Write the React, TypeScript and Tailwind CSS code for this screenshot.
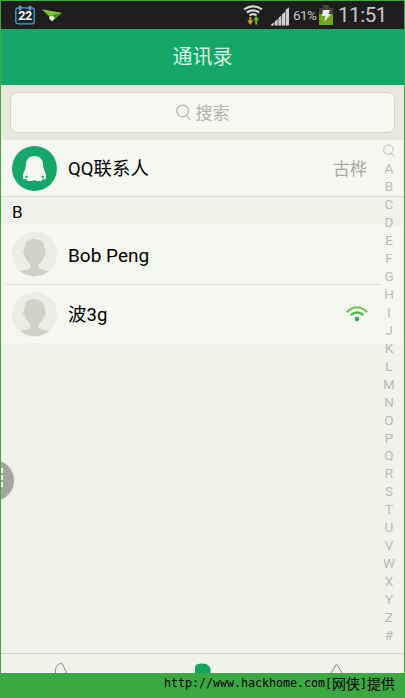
import React from "react";

const LETTERS = "ABCDEFGHIJKLMNOPQRSTUVWXYZ#".split("");

function SearchIcon({ className }: { className: string }) {
  return (
    <svg viewBox="0 0 15 16" className={className} fill="none" stroke="currentColor" strokeWidth="1.2">
      <circle cx="6.7" cy="7" r="5.9" />
      <path d="M10.4 11.4 13.6 15.2" strokeLinecap="round" />
    </svg>
  );
}

function StatusBar() {
  return (
    <div className="flex h-7 shrink-0 items-center bg-[#1e1e1e] text-[#c8c8c8]">
      <svg viewBox="0 0 20 20" className="ml-3.5 h-5 w-5 shrink-0">
        <rect x="0.8" y="2.8" width="18.4" height="16" rx="2.4" fill="#17232a" stroke="#4f9fc4" strokeWidth="1.3" />
        <path d="M5 .8v4.4M15 .8v4.4" stroke="#5cabd0" strokeWidth="2.4" />
        <text x="10.1" y="14.8" textAnchor="middle" fontFamily="Roboto, sans-serif" fontSize="12.5" fontWeight="700" letterSpacing="-0.3" fill="#fff">22</text>
      </svg>
      <svg viewBox="0 0 20 13" className="ml-[7px] h-[13px] w-5 shrink-0">
        <path d="M0 .5 20 4 11 11.5Z" fill="#62ad25" />
        <path d="M0 .5 20 4 8 6.5Z" fill="#80c83c" />
        <path d="m8 6.4 12-2.4-8.5 6.5Z" fill="#438e1c" />
        <path d="m7 8 3.2-1.5 2.8 2.5-3 3.2-2.5-2Z" fill="#e9efe5" />
      </svg>
      <svg viewBox="0 0 20 21" className="ml-[181px] h-[21px] w-5 shrink-0" fill="none" stroke="#d4d4d4" strokeWidth="2.2">
        <path d="M1 4.4Q10-1.8 19 4.4M3.8 7.5Q10 3.2 16.2 7.5M6.4 10.5Q10 7.7 13.6 10.5" />
        <path d="M7.3 12v5" stroke="#d3a01f" strokeWidth="2" />
        <path d="M4.3 15.5h6l-3 4.5Z" fill="#d3a01f" stroke="none" />
        <path d="M13.2 14.5v5" stroke="#68b52f" strokeWidth="2" />
        <path d="M10.2 15.2h6l-3-4.2Z" fill="#68b52f" stroke="none" />
      </svg>
      <svg viewBox="0 0 18 19" className="ml-2 mt-0.5 h-[19px] w-[18px] shrink-0" fill="#cfcfcf">
        <path d="M0 18.5v-1l3-2v3ZM3.7 18.5v-4l3-2.5v6.5ZM7.4 18.5v-7.5l3-2.5v10ZM11 18.5V7.5l3-2.8v13.8ZM14.6 18.5V3L18 .2v18.3Z" />
      </svg>
      <span className="ml-[4px] w-[26px] whitespace-nowrap pt-px text-[13.5px] leading-none tracking-[-0.6px]">61%</span>
      <svg viewBox="0 0 14 20" className="h-5 w-3.5 shrink-0">
        <path d="M4 0h6v3h4v17H0V3h4Z" fill="#444" />
        <path d="M0 9h14v11H0Z" fill="#72a61c" />
        <path d="M4 5h7L9.5 9H12L5 17l1.5-6H3Z" fill="#eee" />
      </svg>
      <span className="ml-[5px] whitespace-nowrap text-[20.5px] leading-none tracking-[-0.45px]">11:51</span>
    </div>
  );
}

function PenguinAvatar() {
  return (
    <svg viewBox="0 0 45 45" className="h-[45px] w-[45px] shrink-0">
      <circle cx="22.5" cy="22.5" r="22.5" fill="#14a768" />
      <path
        d="M22.5 10c-5 0-8.5 3.3-8.5 8.3 0 2-.4 3.700-1.300 5.700-1.200 2.600-1.900 4.700-1.700 6.700 0 1.600.6 2.700 1.200 3 .8-.2 1.300-1 1.800-1.500l.8 1.200c-.6.900.2 1.400 1.200 1.500h4.500l2-.9 2 .9h4.500c1-.1 1.800-.6 1.200-1.500l.8-1.200c.5.500 1 1.300 1.800 1.500.6-.3 1.200-1.400 1.200-3 .2-2-.5-4.100-1.700-6.700-.9-2-1.300-3.700-1.300-5.700 0-5-3.500-8.300-8.500-8.300Z"
        fill="#f5f8f1"
      />
      <path d="M13 30.500l1.400-1 1.600 1-1.500 1.700ZM32 30.500l-1.400-1-1.600 1 1.500 1.700Z" fill="#14a768" />
    </svg>
  );
}

function PersonAvatar() {
  return (
    <svg viewBox="0 0 45 45" className="h-[45px] w-[45px] shrink-0">
      <circle cx="22.5" cy="22.5" r="22.5" fill="#eceee5" />
      <path
        d="M14 9.2c1.3.3 2.1.1 3.2-.8 3-1.9 8.9-2 12.3.8 2.8 2.3 3.5 5.2 3.100 9.200 1.800 1 1.500 4.300-.5 5.800-1.300 3.800-3.200 6-5.600 8.200v2.800c1.300 2.700 6.800 2.400 10.300 3.900A22.500 22.500 0 0 1 8.200 39.100c3.500-1.500 9-1.200 10.300-3.900v-2.800c-2.400-2.200-4.300-4.400-5.600-8.200-2-1.500-2.300-4.800-.5-5.800-.3-2.700-.1-4 1.200-6.500-.1-.8.800-1.500.4-2.700Z"
        fill="#d0d2c7"
      />
    </svg>
  );
}

function IndexRail() {
  return (
    <nav className="absolute right-[5px] top-[140px] flex w-5 flex-col items-center text-[13.5px] leading-none text-[#b9bab5]">
      <div className="flex h-[19px] items-center">
        <SearchIcon className="h-[13px] w-[12px]" />
      </div>
      {LETTERS.map((letter) => (
        <span key={letter} className="flex h-[17.96px] items-center">{letter}</span>
      ))}
    </nav>
  );
}

export default function App() {
  return (
    <div className="flex h-[698px] w-[405px] flex-col overflow-hidden bg-[#3ba942] font-['Roboto','Noto_Sans_CJK_SC',sans-serif]">
      <div className="relative mx-px mt-px flex h-[672px] shrink-0 flex-col overflow-hidden bg-[#f1f3eb]">
        <StatusBar />
        <header className="flex h-14 shrink-0 items-center justify-center bg-[#14a768] text-[20px] text-[#d8f3e5]">
          <h1>通讯录</h1>
        </header>
        <div className="flex h-[55px] shrink-0 items-center bg-[#e8e9dc] px-[9px]">
          <div className="flex h-[41px] w-full items-center justify-center gap-[5px] rounded-[7px] border border-[#d3d5ca] bg-[#f6f8f1] text-[17px] text-[#b0b2ac]">
            <SearchIcon className="-mt-px h-4 w-[15px]" />
            <span className="pt-[2px]">搜索</span>
          </div>
        </div>
        <section className="flex h-[57px] shrink-0 items-center border-b border-[#dadcd5] bg-[#f5f8f1] pl-[11px] pr-[37px] text-black">
          <PenguinAvatar />
          <span className="ml-[11px] pt-[4px] text-[18.5px]">QQ联系人</span>
          <span className="ml-auto pt-[3px] text-[17px] text-[#a9aba4]">古桦</span>
        </section>
        <h2 className="flex h-7 shrink-0 items-center pl-[11px] pt-[3px] text-[17px] text-black">B</h2>
        <section className="flex h-[118px] shrink-0 flex-col bg-[#f5f7f1] text-black">
          <div className="ml-1 mr-[22px] flex h-[60px] items-center border-b border-[#dcded8] pl-[7px]">
            <PersonAvatar />
            <span className="ml-[11px] pt-[3px] text-[19px]">Bob Peng</span>
          </div>
          <div className="ml-[11px] mr-[36px] flex h-[58px] items-center">
            <PersonAvatar />
            <span className="ml-[11px] pt-[3px] text-[18.5px]">波3g</span>
            <svg viewBox="0 0 22 16" className="ml-auto h-4 w-[22px]" fill="none" strokeWidth="2">
              <path d="M1 6Q11-3.5 21 6" stroke="#65c33c" />
              <path d="M4.7 9.3Q11 3.5 17.3 9.3" stroke="#49b944" />
              <circle cx="11" cy="13" r="2.3" fill="#25ad51" />
            </svg>
          </div>
        </section>
        <footer className="mt-auto flex h-5 shrink-0 overflow-hidden border-t border-[#d3d5d0]">
          <svg viewBox="0 0 403 19" className="h-[19px] w-[403px]" fill="none" stroke="#858783" strokeWidth="1">
            <path d="M54.5 19v-3c.3-3 2-6.3 6-6.5 1.5 1.5 3.8 6 5 9.5" />
            <path d="M194 19v-5c0-1 .5-2.5 1.5-3.5 1.5-.5 4-1 6-1s6 .5 8 5V19Z" fill="#14a75b" stroke="none" />
            <path d="m330 19 5.5-9 5.5 9" />
          </svg>
        </footer>
        <IndexRail />
        <div className="absolute -left-[28px] top-[459px] flex h-[41px] w-[41px] items-center justify-end rounded-full bg-[#a4a5a1] pr-[11px] ring-2 ring-[#eaece5]">
          <div className="flex -translate-y-[3px] flex-col gap-[2px]">
            <i className="h-[5px] w-[2px] bg-[#f3f4ef]" />
            <i className="h-[5px] w-[2px] bg-[#f3f4ef]" />
            <i className="h-[5px] w-[2px] bg-[#f3f4ef]" />
          </div>
        </div>
      </div>
      <div className="flex h-[25px] shrink-0 items-start justify-end whitespace-pre pr-[10px] font-['DejaVu_Sans_Mono','Noto_Sans_CJK_SC',monospace] text-[11.63px] leading-[21px] text-black">
        <span>http://www.hackhome.com[</span>
        <span className="font-['Noto_Sans_CJK_SC',sans-serif] text-[14px]">网侠</span>
        <span>]</span>
        <span className="font-['Noto_Sans_CJK_SC',sans-serif] text-[14px]">提供</span>
      </div>
    </div>
  );
}
